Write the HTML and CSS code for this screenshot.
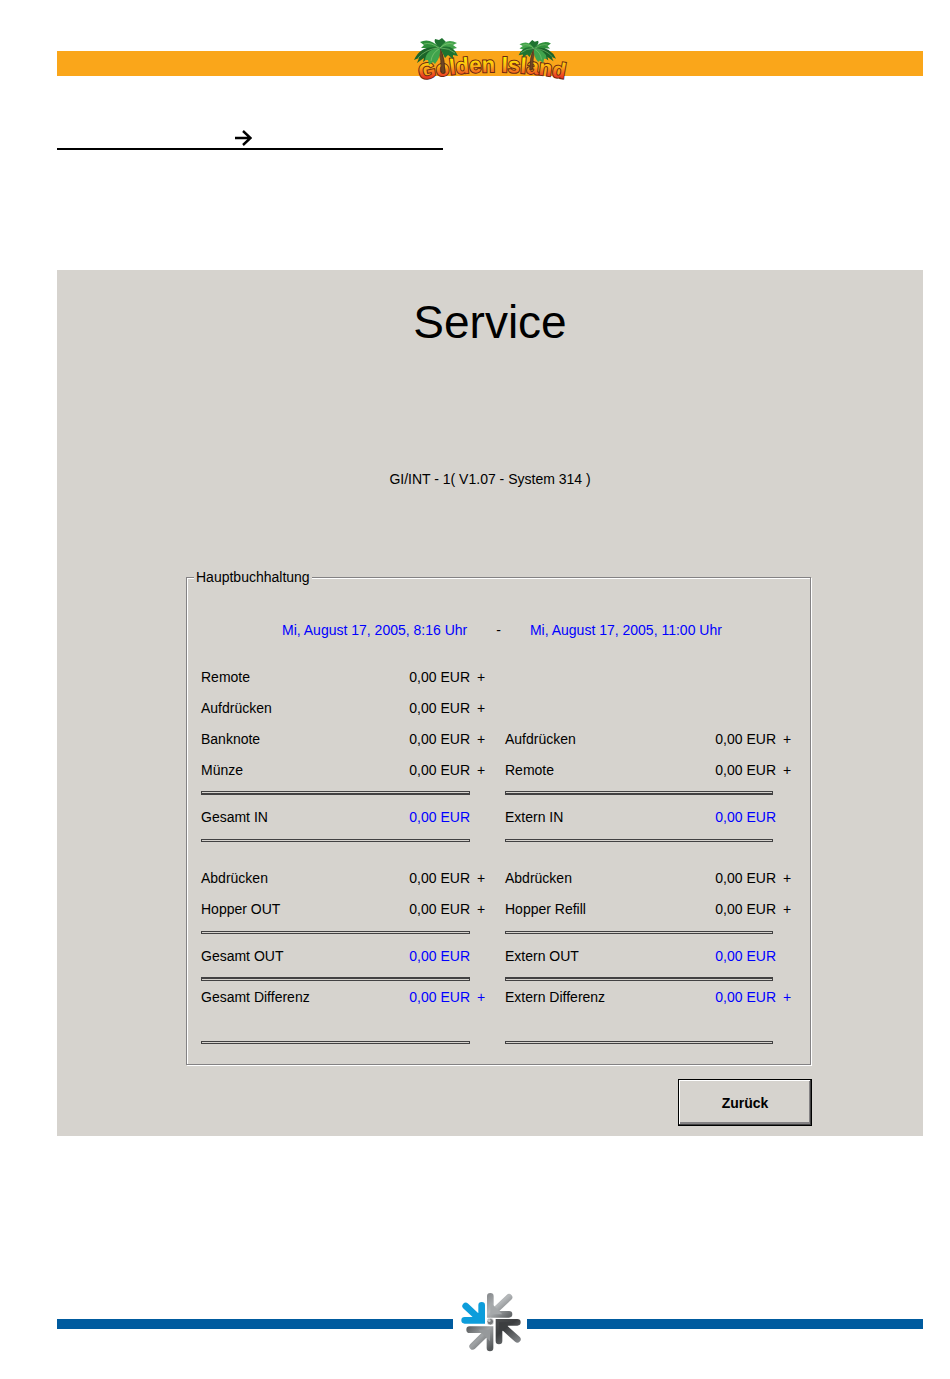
FILE: index.html
```html
<!DOCTYPE html>
<html lang="de">
<head>
    <meta charset="UTF-8">
    <meta name="viewport" content="width=device-width, initial-scale=1.0">
    <title>Golden Island - Service</title>
    <link rel="stylesheet" href="styles.css">
</head>
<body>
    <header class="banner">
        <svg class="logo" viewBox="410 33 160 60" role="img" aria-label="Golden Island">
            <defs>
                <linearGradient id="fire" gradientUnits="userSpaceOnUse" x1="0" y1="56" x2="0" y2="78">
                    <stop offset="0" stop-color="#fff200"/>
                    <stop offset="0.4" stop-color="#fdb913"/>
                    <stop offset="0.8" stop-color="#f04e23"/>
                    <stop offset="1" stop-color="#e0301e"/>
                </linearGradient>
                <g id="palm">
                    <path d="M24 11 Q28 22 27 34 L31 35 Q31 22 27 11Z" fill="#6d4424" stroke="#3a2417" stroke-width="0.6"/>
                    <path d="M26 10 Q16 -1 6 4 L10 7 L7 10 L13 10 L13 14Z" fill="#2f8f3b"/>
                    <path d="M26 10 Q7 6 0 22 L5 20 L3 25 L10 20 L9 24 L18 17Z" fill="#1b6429"/>
                    <path d="M26 10 Q12 11 11 22 L14 22 L15 27 L19 24 L21 26 Q27 19 26 10Z" fill="#3fa34c"/>
                    <path d="M26 10 Q19 5 21 1 L25 2 L28 0 L32 4Z" fill="#1f7330"/>
                    <path d="M26 10 Q32 -1 43 5 L39 7 L43 10 L35 12Z" fill="#43a34b"/>
                    <path d="M26 10 Q38 5 44 18 L39 17 L39 21 L34 17 L31 20Z" fill="#1f7330"/>
                    <path d="M25 10 Q17 4 10 6 M26 10 Q32 4 39 6 M25 11 Q18 15 17 23 M27 10 Q35 10 41 15 M24 10 Q12 11 4 20" fill="none" stroke="#8fce7c" stroke-width="0.6"/>
                </g>
                <path id="arc" d="M420 79 Q494 63 570 79"/>
            </defs>
            <text class="logo-text" fill="url(#fire)"><textPath href="#arc">Golden Island</textPath></text>
            <use href="#palm" x="414" y="37"/>
            <use href="#palm" transform="translate(556 39) scale(-0.85 0.85)"/>
        </svg>
    </header>

    <div class="trail">
        <svg class="trail-arrow" viewBox="0 0 17 16" aria-hidden="true">
            <path d="M0 8H15M8 1L15.500 8L8 15" fill="none" stroke="#000" stroke-width="2.400"/>
        </svg>
    </div>

    <main class="panel">
        <h1>Service</h1>
        <p class="version">GI/INT - 1( V1.07 - System 314 )</p>

        <fieldset>
            <legend>Hauptbuchhaltung</legend>
            <div class="period">
                <span class="blue">Mi, August 17, 2005, 8:16 Uhr</span>
                <span>-</span>
                <span class="blue">Mi, August 17, 2005, 11:00 Uhr</span>
            </div>
            <table>
                <colgroup>
                    <col>
                    <col class="col-amount">
                    <col class="col-sign">
                    <col>
                    <col class="col-extern">
                    <col class="col-last">
                </colgroup>
                <tbody>
                    <tr><th>Remote</th><td>0,00 EUR</td><td class="sign">+</td><td></td><td></td><td></td></tr>
                    <tr><th>Aufdrücken</th><td>0,00 EUR</td><td class="sign">+</td><td></td><td></td><td></td></tr>
                    <tr><th>Banknote</th><td>0,00 EUR</td><td class="sign">+</td><th>Aufdrücken</th><td>0,00 EUR</td><td class="sign">+</td></tr>
                    <tr><th>Münze</th><td>0,00 EUR</td><td class="sign">+</td><th>Remote</th><td>0,00 EUR</td><td class="sign">+</td></tr>
                    <tr class="line thick"><td colspan="2"><hr></td><td></td><td colspan="2"><hr></td><td></td></tr>
                    <tr><th>Gesamt IN</th><td class="blue">0,00 EUR</td><td></td><th>Extern IN</th><td class="blue">0,00 EUR</td><td></td></tr>
                    <tr class="line"><td colspan="2"><hr></td><td></td><td colspan="2"><hr></td><td></td></tr>
                </tbody>
                <tbody>
                    <tr class="space"><td colspan="6"></td></tr>
                    <tr><th>Abdrücken</th><td>0,00 EUR</td><td class="sign">+</td><th>Abdrücken</th><td>0,00 EUR</td><td class="sign">+</td></tr>
                    <tr><th>Hopper OUT</th><td>0,00 EUR</td><td class="sign">+</td><th>Hopper Refill</th><td>0,00 EUR</td><td class="sign">+</td></tr>
                    <tr class="line"><td colspan="2"><hr></td><td></td><td colspan="2"><hr></td><td></td></tr>
                    <tr><th>Gesamt OUT</th><td class="blue">0,00 EUR</td><td></td><th>Extern OUT</th><td class="blue">0,00 EUR</td><td></td></tr>
                    <tr class="line thick-top"><td colspan="2"><hr></td><td></td><td colspan="2"><hr></td><td></td></tr>
                    <tr class="total"><th>Gesamt Differenz</th><td class="blue">0,00 EUR</td><td class="sign blue">+</td><th>Extern Differenz</th><td class="blue">0,00 EUR</td><td class="sign blue">+</td></tr>
                    <tr class="line last"><td colspan="2"><hr></td><td></td><td colspan="2"><hr></td><td></td></tr>
                </tbody>
            </table>
        </fieldset>

        <div class="actions">
            <button type="button">Zurück</button>
        </div>
    </main>

    <footer>
        <span class="bar"></span>
        <svg class="star" viewBox="30 24 186 186" aria-hidden="true">
            <defs>
                <linearGradient id="steel" gradientUnits="userSpaceOnUse" x1="140" y1="105" x2="200" y2="180">
                    <stop offset="0" stop-color="#4a4c4e"/>
                    <stop offset="0.4" stop-color="#3c3e40"/>
                    <stop offset="1" stop-color="#85888b"/>
                </linearGradient>
                <linearGradient id="silver" gradientUnits="userSpaceOnUse" x1="110" y1="30" x2="170" y2="100">
                    <stop offset="0" stop-color="#85888b"/>
                    <stop offset="0.5" stop-color="#b5b8ba"/>
                    <stop offset="1" stop-color="#66696b"/>
                </linearGradient>
                <linearGradient id="iron" gradientUnits="userSpaceOnUse" x1="60" y1="125" x2="125" y2="190">
                    <stop offset="0" stop-color="#606365"/>
                    <stop offset="0.5" stop-color="#a0a3a5"/>
                    <stop offset="1" stop-color="#55585a"/>
                </linearGradient>
            </defs>
            <g fill="none" stroke-width="20" stroke-linecap="round" stroke-linejoin="miter">
                <path d="M50 63L94 104M98 61V106H47" stroke="#0d9ddb"/>
                <path d="M180 37L128 86M124 34V88H180" stroke="url(#silver)"/>
                <path d="M205 163L152 115M205 112H150V168" stroke="url(#steel)"/>
                <path d="M71 184L118 138M62 134H123V189" stroke="url(#iron)"/>
            </g>
            <path d="M66 106L98 76V106Z" fill="#0d9ddb"/>
            <path d="M124 52L160 88H124Z" fill="#a5a8aa"/>
            <path d="M150 148L186 112H150Z" fill="#3c3e40"/>
            <path d="M88 134L123 169V134Z" fill="#96999b"/>
            <circle cx="124" cy="110" r="10" fill="#75787a" stroke="#fff" stroke-width="2"/>
            <circle cx="121" cy="107" r="4" fill="#c9cccd"/>
        </svg>
        <span class="bar"></span>
    </footer>
</body>
</html>
```
FILE: styles.css
```css
body {
    margin: 0;
    padding: 51px 27px 24px 57px;
    background-color: #fff;
    color: #000;
    font-family: "Liberation Sans", Arial, sans-serif;
    font-size: 14px;
    line-height: 16px;
}
.banner {
    display: flex;
    justify-content: center;
    align-items: center;
    height: 25px;
    background-color: #faa61a;
}
.logo {
    flex: none;
    width: 160px;
    height: 60px;
}
.logo-text {
    font-size: 22px;
    font-weight: bold;
    stroke: #6b2a12;
    stroke-width: 2px;
    paint-order: stroke;
}
.trail {
    box-sizing: border-box;
    max-width: 386px;
    margin: 54px 0 120px;
    padding: 0 0 2px 178px;
    border-bottom: 2px solid #000;
}
.trail-arrow {
    display: block;
    width: 17px;
    height: 16px;
}
.panel {
    padding: 28px 111px 10px 129px;
    background-color: #d6d3ce;
}
h1 {
    margin: 0 0 125px;
    font-size: 46px;
    font-weight: normal;
    line-height: 48px;
    text-align: center;
}
/* the fieldset sits right of the panel centre, the headings do not */
h1,
.version {
    margin-left: -18px;
}
.version {
    margin-top: 0;
    margin-bottom: 82px;
    text-align: center;
}
fieldset {
    min-width: 0;
    margin: 0 1px 0 0;
    padding: 37px 15px 20px 14px;
    border: 1px solid #848284;
    box-shadow: 1px 1px 0 #fff, inset 1px 1px 0 #fff;
}
legend {
    margin-left: -7px;
    padding: 0 2px;
    background-color: #d6d3ce;
}
.period {
    display: flex;
    gap: 29px;
    margin-bottom: 23px;
    padding-left: 81px;
    white-space: nowrap;
}
.blue {
    color: #0000ff;
}
table {
    width: 100%;
    table-layout: fixed;
    border-collapse: collapse;
}
.col-amount {
    width: 90px;
}
.col-extern {
    width: 92px;
}
.col-sign {
    width: 35px;
}
.col-last {
    width: 19px;
}
th,
td {
    height: 31px;
    padding: 0;
    font-weight: normal;
    text-align: left;
    white-space: nowrap;
}
th + td {
    text-align: right;
}
.sign {
    padding-left: 7px;
}
.line td {
    height: 16px;
}
.space td {
    height: 14px;
}
.total th,
.total td {
    height: 20px;
}
.last td {
    height: 37px;
    vertical-align: bottom;
}
hr {
    box-sizing: border-box;
    height: 3px;
    margin: 0;
    border: 1px solid #424142;
}
/* the extern amounts reach a little past their rules */
td:nth-child(3) hr {
    margin-right: 3px;
}
.thick hr {
    height: 4px;
    border-bottom-width: 2px;
}
.thick-top hr {
    height: 4px;
    border-top-width: 2px;
}
.actions {
    display: flex;
    justify-content: flex-end;
    margin-top: 14px;
}
button {
    width: 134px;
    height: 47px;
    border: 1px solid #000;
    border-radius: 0;
    background-color: #d6d3ce;
    box-shadow: inset -1px -1px 0 #424142, inset 1px 1px 0 #fff, inset -2px -3px 0 #848284;
    color: #000;
    font: bold 14px "Liberation Sans", Arial, sans-serif;
}
footer {
    display: flex;
    align-items: center;
    gap: 6px;
    margin-top: 157px;
}
.bar {
    flex: 1;
    height: 10px;
    background-color: #005b9f;
}
.star {
    width: 62px;
    height: 62px;
}
```
